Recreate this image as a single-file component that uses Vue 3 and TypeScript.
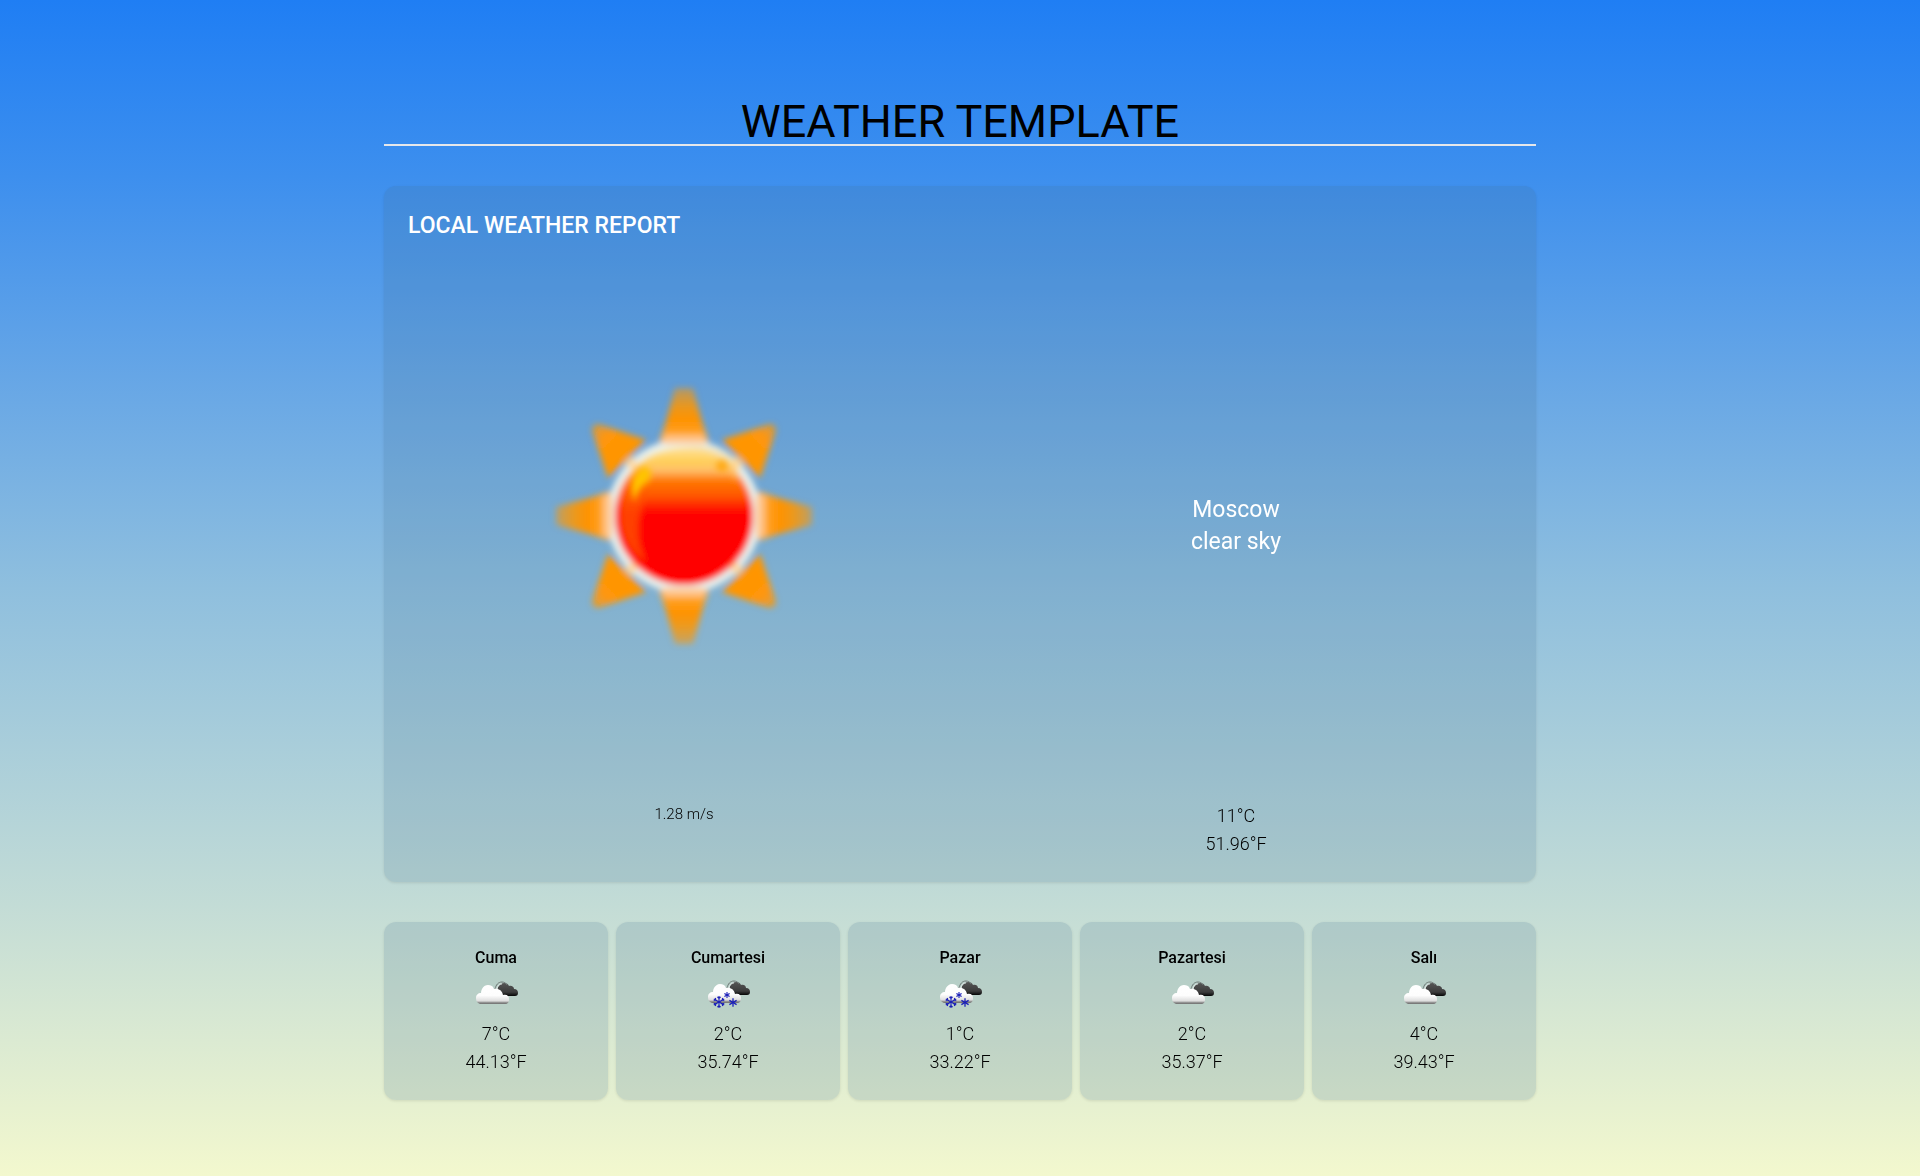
<script setup lang="ts">
interface Day {
  name: string
  snow: boolean
  celsius: string
  fahrenheit: string
}

const days: Day[] = [
  { name: 'Cuma', snow: false, celsius: '7', fahrenheit: '44.13' },
  { name: 'Cumartesi', snow: true, celsius: '2', fahrenheit: '35.74' },
  { name: 'Pazar', snow: true, celsius: '1', fahrenheit: '33.22' },
  { name: 'Pazartesi', snow: false, celsius: '2', fahrenheit: '35.37' },
  { name: 'Salı', snow: false, celsius: '4', fahrenheit: '39.43' },
]

const rays = [0, 90, 180, 270]
const arms = [0, 60, 120]
const smallArms = [0, 60, 120]
</script>

<template>
  <div class="page">
    <main class="container">
      <h1 class="title">WEATHER TEMPLATE</h1>

      <section class="card report">
        <h2 class="report-title">LOCAL WEATHER REPORT</h2>
        <div class="columns">
          <svg class="sun" viewBox="-276 -274 552 552" role="img" aria-label="clear sky">
            <defs>
              <linearGradient id="disc" x1="0" y1="0" x2="0" y2="1">
                <stop offset="0" stop-color="#fff0b8" />
                <stop offset="0.1" stop-color="#ffd050" />
                <stop offset="0.17" stop-color="#ffc070" />
                <stop offset="0.24" stop-color="#ff7a00" />
                <stop offset="0.36" stop-color="#ff5500" />
                <stop offset="0.46" stop-color="#ff0c00" />
                <stop offset="0.52" stop-color="#ff0000" />
                <stop offset="1" stop-color="#ff0000" />
              </linearGradient>
              <linearGradient id="ray" gradientUnits="userSpaceOnUse" x1="0" y1="-130" x2="0" y2="-74">
                <stop offset="0" stop-color="#ff9608" stop-opacity="0.45" />
                <stop offset="0.35" stop-color="#ff9608" stop-opacity="0.85" />
                <stop offset="0.6" stop-color="#ff9200" />
                <stop offset="0.75" stop-color="#ff9a14" />
                <stop offset="1" stop-color="#ffb850" />
              </linearGradient>
              <linearGradient id="corner" gradientUnits="userSpaceOnUse" x1="92" y1="-92" x2="54" y2="-54">
                <stop offset="0" stop-color="#ff9608" stop-opacity="0.65" />
                <stop offset="0.35" stop-color="#ff9608" />
                <stop offset="1" stop-color="#ff9400" />
              </linearGradient>
              <filter id="soft" x="-20%" y="-20%" width="140%" height="140%">
                <feGaussianBlur stdDeviation="3" />
              </filter>
            </defs>
            <g filter="url(#soft)">
              <g v-for="angle in rays" :key="angle" :transform="`rotate(${angle})`">
                <path d="M-25-74L-18-94L-9-128H9L18-94L25-74Z" fill="url(#ray)" />
                <path d="M38-76L86-92Q91-92 92-86L76-38Z" fill="url(#corner)" />
              </g>
              <circle r="77" fill="#eaf1ec" />
              <g v-for="angle in rays" :key="angle" :transform="`rotate(${angle})`">
                <path d="M-20-72V-80H20V-72Z" fill="#ffc890" />
                <path d="M46-50L52-60L60-52L50-46Z" fill="#ffd9a0" />
              </g>
              <circle r="69" fill="url(#disc)" />
              <path d="M-58-20Q-42-62 0-56Q38-60 52-34Q66-60 20-70Q-44-70-58-20Z" fill="#ffcf70" opacity="0.4" />
              <path d="M-64 4Q-66-24-42-48Q-34-34-44-4Q-50 24-38 46Q-62 30-64 4Z" fill="#ff5a00" opacity="0.7" />
            </g>
            <g filter="url(#soft)">
              <path d="M-50-14Q-58-40-40-50Q-28-46-36-34Q-46-28-50-14Z" fill="#ffc400" />
              <circle cx="38" cy="-50" r="6" fill="#ffa000" opacity="0.8" />
            </g>
          </svg>
          <p class="place">Moscow<br />clear sky</p>
          <p class="wind">1.28 m/s</p>
          <p class="temps">11°C<br />51.96°F</p>
        </div>
      </section>

      <ul class="days">
        <li v-for="day in days" :key="day.name" class="card day">
          <h3 class="day-name">{{ day.name }}</h3>
          <svg class="day-icon" viewBox="0 0 50 50" aria-hidden="true">
            <defs>
              <linearGradient :id="`light-${day.name}`" x1="0" y1="0" x2="0" y2="1">
                <stop offset="0" stop-color="#ffffff" />
                <stop offset="0.55" stop-color="#fdfdfd" />
                <stop offset="0.84" stop-color="#dedede" />
                <stop offset="0.93" stop-color="#8c8c8c" />
                <stop offset="1" stop-color="#6e6e6e" />
              </linearGradient>
              <linearGradient :id="`dark-${day.name}`" x1="0" y1="0" x2="0" y2="1">
                <stop offset="0" stop-color="#555555" />
                <stop offset="0.7" stop-color="#3c3c3c" />
                <stop offset="1" stop-color="#050505" />
              </linearGradient>
            </defs>
            <g :transform="day.snow ? 'translate(0 -1)' : undefined">
              <path
                d="M27 26C25 22 26 16 30 14C33 12 37 13 38 16C41 15 43 17 43 19C46 19 47 21 47 23C47 25 46 26 44 26Z"
                :fill="`url(#dark-${day.name})`"
              />
              <path d="M24 19C25 15 27 12 31 12C33 12 35 13 36 15" fill="none" stroke="#6d7674" stroke-width="1" />
              <path d="M26 19C27 15 29 14 31 14" fill="none" stroke="#e8eeec" stroke-width="1" />
              <path
                d="M9 34C6 33 5 31 5 28C5 25 7 23 10 23C10 19 13 15 17 15C20 15 22 16 23 19C27 18 31 20 32 25C36 24 38 26 38 29C38 32 37 34 34 34Z"
                :fill="`url(#light-${day.name})`"
              />
            </g>
            <g v-if="day.snow" fill="none" stroke="#1b1fb8">
              <g transform="translate(16 32)">
                <path
                  v-for="arm in arms"
                  :key="arm"
                  d="M0-6V6M-1.6-5.2L0-3.6L1.6-5.2M-1.6 5.2L0 3.6L1.6 5.2"
                  :transform="`rotate(${arm})`"
                  stroke-width="1.1"
                />
              </g>
              <g transform="translate(24 25)">
                <path v-for="arm in smallArms" :key="arm" d="M0-3V3" :transform="`rotate(${arm})`" stroke-width="1.1" />
              </g>
              <g transform="translate(30 32.5)">
                <path v-for="arm in smallArms" :key="arm" d="M0-4.2V4.2" :transform="`rotate(${arm})`" stroke-width="1.3" />
              </g>
            </g>
          </svg>
          <p class="temps">{{ day.celsius }}°C<br />{{ day.fahrenheit }}°F</p>
        </li>
      </ul>
    </main>
  </div>
</template>

<style>
body {
  margin: 0;
}
</style>

<style scoped>
.page {
  box-sizing: border-box;
  min-height: 100vh;
  padding: 96px 0 76px;
  background: linear-gradient(
    180deg,
    #1f7ef4 0%,
    #3d8fee 15%,
    #66a6e6 32%,
    #8fbfde 50%,
    #c3dcd6 77%,
    #f3f8ce 100%
  );
  font-family: Roboto, 'Liberation Sans', sans-serif;
  font-weight: 300;
  color: #000;
}

.container {
  display: flex;
  flex-direction: column;
  gap: 40px;
  width: 60%;
  margin: 0 auto;
}

h1,
h2,
h3,
p,
ul {
  margin: 0;
  padding: 0;
}

.container .title {
  padding-top: 4px;
  border-bottom: 2px solid #e5e7eb;
  font-size: 45px;
  line-height: 44px;
  font-weight: 400;
  text-align: center;
}

.card {
  padding: 24px;
  border-radius: 12px;
  background: rgba(68, 111, 144, 0.18);
  box-shadow: 0 1px 3px rgba(0, 0, 0, 0.1);
}

.report-title {
  font-size: 23px;
  line-height: 32px;
  font-weight: 500;
  color: #fff;
}

.columns {
  display: grid;
  grid-template-columns: 1fr 1fr;
  row-gap: 8px;
  text-align: center;
}

.sun {
  display: block;
  width: 100%;
}

.columns .place {
  align-self: center;
  padding-top: 16px;
  font-size: 23px;
  line-height: 32px;
  font-weight: 400;
  color: #fff;
}

.wind {
  font-size: 15px;
  line-height: 24px;
}

.temps {
  font-size: 18px;
  line-height: 28px;
}

.days {
  display: grid;
  grid-template-columns: repeat(5, 1fr);
  gap: 8px;
  list-style: none;
}

.day {
  display: flex;
  flex-direction: column;
  align-items: center;
  text-align: center;
}

.day-name {
  font-size: 16px;
  line-height: 24px;
  font-weight: 500;
}

.day-icon {
  width: 50px;
  height: 50px;
}
</style>
